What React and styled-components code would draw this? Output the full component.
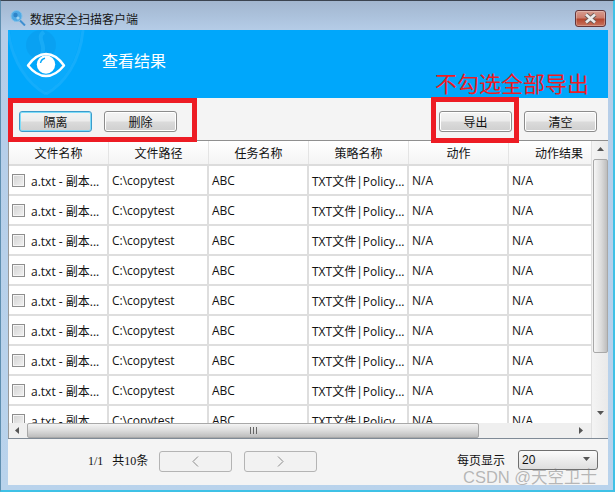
import React from "react";
import styled, { createGlobalStyle } from "styled-components";

const GlobalStyle = createGlobalStyle`
  html, body {
    margin: 0;
    padding: 0;
    width: 615px;
    height: 492px;
    overflow: hidden;
    background: #b9d2ea;
  }
  * { box-sizing: border-box; }
`;

const uiFont = `"Open Sans", "Noto Sans CJK SC", sans-serif`;
const cjkFont = `"Noto Sans CJK SC", sans-serif`;

const Window = styled.div`
  position: relative;
  width: 615px;
  height: 492px;
  display: flex;
  flex-direction: column;
  padding: 0 5px 5px 7px;
  background: linear-gradient(#a2b6cf 0, #b5cde8 30px, #b9d3ec 100%);
  border-top: 1px solid #3b4450;
  border-left: 1px solid #5f8fb0;
  border-right: 2px solid #3fc1e6;
  border-bottom: 2px solid #3fc1e6;
  font-family: ${uiFont};
  font-size: 12px;
  color: #111;
`;

const TitleBar = styled.div`
  height: 29px;
  margin: 0 -5px 0 -7px;
  padding: 0 7px 0 9px;
  display: flex;
  align-items: center;
  gap: 4px;
`;

const TitleIcon = styled.div`
  width: 16px;
  height: 16px;
  margin-top: 5px;
`;

const TitleText = styled.span`
  font-family: ${cjkFont};
  font-size: 12px;
  color: #151515;
  flex: 1;
  margin-top: 5px;
`;

const CloseButton = styled.div`
  width: 31px;
  height: 17px;
  margin-top: 6px;
  border: 1px solid #64363a;
  border-radius: 3px;
  background: linear-gradient(#d79c8f 0, #cc7d6c 45%, #b4472f 55%, #c8735e 100%);
  box-shadow: inset 0 0 0 1px rgba(255, 255, 255, 0.25);
  display: flex;
  align-items: center;
  justify-content: center;
`;

const Banner = styled.div`
  height: 68px;
  background: #00a7fb;
  display: flex;
  align-items: center;
  overflow: hidden;
`;

const BannerLogo = styled.div`
  width: 94px;
  height: 68px;
  flex-shrink: 0;
`;

const BannerTitle = styled.div`
  font-family: ${cjkFont};
  font-size: 16px;
  color: #fff;
  margin-bottom: 9px;
`;

const Toolbar = styled.div`
  height: 42px;
  padding: 13px 11px 0 11px;
  background: #f4f4f4;
  display: flex;
  gap: 12px;
`;

const Spacer = styled.div`
  flex: 1;
`;

const ToolButton = styled.div`
  width: 73px;
  height: 21px;
  border: 1px solid ${(p) => (p.$focused ? "#3c9ccb" : "#8c8c8c")};
  border-radius: 3px;
  background: linear-gradient(#f4f4f4 0, #ececec 45%, #dadada 55%, #cfcfcf 100%);
  box-shadow: ${(p) => (p.$focused ? "inset 0 0 0 1px #7fdcf8" : "inset 0 0 0 1px #fff")};
  font-family: ${cjkFont};
  font-size: 12px;
  display: flex;
  align-items: center;
  justify-content: center;
`;

const TableArea = styled.div`
  height: 299px;
  display: flex;
  border-top: 1px solid #8f8f8f;
  border-bottom: 1px solid #7f8a96;
  background: #fff;
`;

const TableMain = styled.div`
  width: 583px;
  display: flex;
  flex-direction: column;
  border-left: 1px solid #9a9a9a;
`;

const Rows = styled.div`
  height: 257px;
  overflow: hidden;
`;

const HeadRow = styled.div`
  height: 25px;
  display: grid;
  grid-template-columns: repeat(5, 100px) 82px;
  border-bottom: 2px solid #dcdcdc;
  background: linear-gradient(#fff, #f4f4f4);
`;

const HeadCell = styled.div`
  font-family: ${cjkFont};
  font-size: 12px;
  text-align: center;
  line-height: 23px;
  border-right: 1px solid #e4e4e4;
  white-space: nowrap;
  &:last-child { border-right: 0; padding-left: 18px; }
`;

const Row = styled.div`
  height: 30px;
  display: grid;
  grid-template-columns: repeat(5, 100px) 82px;
  border-bottom: 2px solid #dedede;
`;

const Cell = styled.div`
  display: flex;
  align-items: center;
  gap: 6px;
  padding: 1px 0 0 3px;
  font-size: 12px;
  white-space: nowrap;
  overflow: hidden;
  border-right: 2px solid #dedede;
  &:last-child { border-right: 0; }
`;

const Check = styled.span`
  width: 13px;
  height: 13px;
  flex-shrink: 0;
  border: 1px solid #8e8e8e;
  background: linear-gradient(135deg, #d2d2d2, #f2f2f2);
  box-shadow: inset 0 0 0 1px #f5f5f5;
`;

const HScroll = styled.div`
  height: 15px;
  display: flex;
  align-items: center;
  background: #efefef;
`;

const ScrollArrow = styled.div`
  width: ${(p) => (p.$wide ? "16px" : "18px")};
  height: ${(p) => (p.$wide ? "18px" : "15px")};
  flex-shrink: 0;
  display: flex;
  align-items: center;
  justify-content: center;
`;

const HThumb = styled.div`
  width: 452px;
  height: 15px;
  border: 1px solid #a8a8a8;
  border-radius: 2px;
  background: linear-gradient(#f4f4f4, #dcdcdc 50%, #bdbdbd);
  display: flex;
  align-items: center;
  justify-content: center;
`;

const VScroll = styled.div`
  width: 17px;
  padding-bottom: 15px;
  display: flex;
  flex-direction: column;
  align-items: center;
  background: linear-gradient(90deg, #f4f4f4, #e9e9e9);
  border-left: 1px solid #e0e0e0;
`;

const VThumb = styled.div`
  width: 15px;
  height: 194px;
  border: 1px solid #a8a8a8;
  border-radius: 2px;
  background: linear-gradient(90deg, #f6f6f6, #dcdcdc 55%, #bdbdbd);
`;

const Grow = styled.div`
  flex: 1;
`;

const Footer = styled.div`
  flex: 1;
  background: #f4f4f4;
  display: flex;
  align-items: flex-start;
  padding: 12px 10px 0 80px;
`;

const PageInfo = styled.div`
  font-family: "Liberation Serif", "Noto Sans CJK SC", serif;
  font-size: 12px;
  width: 71px;
  line-height: 21px;
  white-space: nowrap;
`;

const PageButton = styled.div`
  width: 73px;
  height: 21px;
  margin-right: 12px;
  border: 1px solid #b4b4b4;
  border-radius: 3px;
  background: #f2f2f2;
  display: flex;
  align-items: center;
  justify-content: center;
`;

const PerPage = styled.div`
  font-family: ${cjkFont};
  font-size: 12px;
  line-height: 18px;
  margin-right: 13px;
`;

const Select = styled.div`
  width: 80px;
  height: 20px;
  margin-top: -1px;
  border: 1px solid #6f6f6f;
  border-radius: 3px;
  background: linear-gradient(#fbfbfb, #dedede);
  padding: 0 7px 0 3px;
  display: flex;
  align-items: center;
  justify-content: space-between;
  font-family: "Liberation Sans", sans-serif;
  font-size: 12px;
`;

const Box = styled.div`
  position: absolute;
  top: ${(p) => p.$top}px;
  left: ${(p) => p.$left}px;
  width: ${(p) => p.$width}px;
  height: ${(p) => p.$height}px;
  border: 5px solid #ed1c24;
`;

const Note = styled.div`
  position: absolute;
  top: 66px;
  left: 434px;
  font-family: ${cjkFont};
  font-size: 22px;
  line-height: 30px;
  color: #ed1c24;
  white-space: nowrap;
`;

const Watermark = styled.div`
  position: absolute;
  top: 466px;
  left: 462px;
  font-family: "Liberation Sans", "Noto Sans CJK SC", sans-serif;
  font-size: 16.5px;
  line-height: 20px;
  color: rgba(120, 120, 120, 0.5);
  white-space: nowrap;
`;

const ROWS = Array.from({ length: 9 });

const Triangle = ({ dir }) => {
  const points = {
    up: "0,4 7,4 3.5,0",
    down: "0,0 7,0 3.5,4",
    left: "4,0 4,7 0,3.5",
    right: "0,0 0,7 4,3.5",
  };
  return (
    <svg width="7" height="7" viewBox="0 0 7 7">
      <polygon points={points[dir]} fill="#555" />
    </svg>
  );
};

const Chevron = ({ right }) => (
  <svg width="7" height="11" viewBox="0 0 7 11">
    <path
      d={right ? "M1 .5 6 5.5 1 10.5" : "M6 .5 1 5.5 6 10.5"}
      fill="none"
      stroke="#8a8a8a"
    />
  </svg>
);

const SearchIcon = () => (
  <svg width="16" height="16" viewBox="0 0 16 16">
    <line x1="9.5" y1="10" x2="15" y2="15.5" stroke="#3f8fd0" strokeWidth="2" />
    <circle cx="6.5" cy="6" r="5.5" fill="#4fa9e4" stroke="#7fc0ea" />
    <circle cx="5.5" cy="5" r="2.2" fill="#2f84c8" />
    <circle cx="8" cy="8" r="1.6" fill="#9fd3f0" />
  </svg>
);

const CloseGlyph = () => (
  <svg width="15" height="11" viewBox="0 0 15 11">
    <path d="M3 1.5 12 9.5M12 1.5 3 9.5" stroke="#6d5a55" strokeWidth="4.5" />
    <path d="M3 1.5 12 9.5M12 1.5 3 9.5" stroke="#ececec" strokeWidth="2.6" />
  </svg>
);

const EyeLogo = () => (
  <svg width="94" height="68" viewBox="0 0 94 68">
    <path d="M2 0 C5 30 20 52 38 62 C56 52 70 30 73 0Z" fill="#fff" opacity="0.04" />
    <path d="M0 0 C4 32 20 54 38 64" fill="none" stroke="#fff" strokeWidth="3" opacity="0.08" />
    <path d="M75 0 C72 32 56 54 38 64" fill="none" stroke="#fff" strokeWidth="3" opacity="0.08" />
    <circle cx="33" cy="15" r="15" fill="#0b8fdf" opacity="0.3" />
    <path d="M36 2 C27 8 40 15 33 26" fill="none" stroke="#36bcff" strokeWidth="4" opacity="0.35" />
    <path
      d="M20 35.5 C26 27 32 24 38 24 C44 24 50 27 56 35.5 C50 43 44 46 38 46 C32 46 26 43 20 35.5Z"
      fill="#00a7fb"
      stroke="#fff"
      strokeWidth="2.4"
      strokeLinejoin="round"
    />
    <circle cx="38" cy="34.5" r="9.2" fill="#fff" />
    <path d="M32.5 33 A6 6 0 0 1 37 28.2" stroke="#00a7fb" strokeWidth="1.4" fill="none" />
  </svg>
);

export default function App() {
  return (
    <>
      <GlobalStyle />
      <Window>
        <TitleBar>
          <TitleIcon>
            <SearchIcon />
          </TitleIcon>
          <TitleText>数据安全扫描客户端</TitleText>
          <CloseButton>
            <CloseGlyph />
          </CloseButton>
        </TitleBar>
        <Banner>
          <BannerLogo>
            <EyeLogo />
          </BannerLogo>
          <BannerTitle>查看结果</BannerTitle>
        </Banner>
        <Toolbar>
          <ToolButton $focused>隔离</ToolButton>
          <ToolButton>删除</ToolButton>
          <Spacer />
          <ToolButton>导出</ToolButton>
          <ToolButton>清空</ToolButton>
        </Toolbar>
        <TableArea>
          <TableMain>
            <HeadRow>
              <HeadCell>文件名称</HeadCell>
              <HeadCell>文件路径</HeadCell>
              <HeadCell>任务名称</HeadCell>
              <HeadCell>策略名称</HeadCell>
              <HeadCell>动作</HeadCell>
              <HeadCell>动作结果</HeadCell>
            </HeadRow>
            <Rows>
              {ROWS.map((_, i) => (
                <Row key={i}>
                  <Cell>
                    <Check />
                    a.txt - 副本...
                  </Cell>
                  <Cell>C:\copytest</Cell>
                  <Cell>ABC</Cell>
                  <Cell>TXT文件|Policy...</Cell>
                  <Cell>N/A</Cell>
                  <Cell>N/A</Cell>
                </Row>
              ))}
            </Rows>
            <HScroll>
              <ScrollArrow>
                <Triangle dir="left" />
              </ScrollArrow>
              <HThumb>
                <svg width="7" height="7" viewBox="0 0 7 7">
                  <path d="M.5 0V7M3.5 0V7M6.5 0V7" stroke="#666" />
                </svg>
              </HThumb>
              <Grow />
              <ScrollArrow>
                <Triangle dir="right" />
              </ScrollArrow>
            </HScroll>
          </TableMain>
          <VScroll>
            <ScrollArrow $wide>
              <Triangle dir="up" />
            </ScrollArrow>
            <VThumb />
            <Grow />
            <ScrollArrow $wide>
              <Triangle dir="down" />
            </ScrollArrow>
          </VScroll>
        </TableArea>
        <Footer>
          <PageInfo>1/1&nbsp;&nbsp;&nbsp;共10条</PageInfo>
          <PageButton>
            <Chevron />
          </PageButton>
          <PageButton>
            <Chevron right />
          </PageButton>
          <Spacer />
          <PerPage>每页显示</PerPage>
          <Select>
            20
            <Triangle dir="down" />
          </Select>
        </Footer>
        <Box $top={97} $left={7} $width={189} $height={44} />
        <Box $top={96} $left={430} $width={88} $height={46} />
        <Note>不勾选全部导出</Note>
        <Watermark>CSDN @天空卫士</Watermark>
      </Window>
    </>
  );
}
